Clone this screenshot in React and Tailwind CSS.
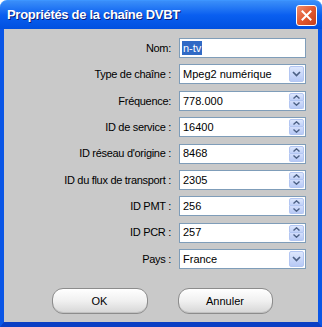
import React from 'react';

const rows = [
  { label: 'Nom:', value: 'n-tv', kind: 'text' },
  { label: 'Type de chaîne :', value: 'Mpeg2 numérique', kind: 'select' },
  { label: 'Fréquence:', value: '778.000', kind: 'spin' },
  { label: 'ID de service :', value: '16400', kind: 'spin' },
  { label: "ID réseau d'origine :", value: '8468', kind: 'spin' },
  { label: 'ID du flux de transport :', value: '2305', kind: 'spin' },
  { label: 'ID PMT :', value: '256', kind: 'spin' },
  { label: 'ID PCR :', value: '257', kind: 'spin' },
  { label: 'Pays :', value: 'France', kind: 'select' },
];

function Chevron() {
  return (
    <svg width="9" height="6" viewBox="0 0 9 6" className="block">
      <path d="M1 1 L4.5 4.5 L8 1" fill="none" stroke="#4d6185" strokeWidth="1.7" />
    </svg>
  );
}

function Field({ row }) {
  return (
    <div className="relative flex h-[20px] w-[127px] items-center border border-[#7f9db9] bg-white">
      {row.kind === 'text' ? (
        <span className="ml-[2px] bg-[#316ac5] px-[1px] leading-[14px] text-white">{row.value}</span>
      ) : (
        <span className="ml-[3px]">{row.value}</span>
      )}
      {row.kind === 'select' && (
        <div className="absolute right-[1px] top-[1px] flex h-[16px] w-[15px] items-center justify-center rounded-[2px] border border-[#b3c6f2] bg-gradient-to-b from-[#dde7fd] to-[#b7c9f5]">
          <Chevron />
        </div>
      )}
      {row.kind === 'spin' && (
        <div className="absolute right-[1px] top-[1px] flex h-[16px] w-[15px] flex-col">
          <div className="flex h-[8px] items-center justify-center rounded-t-[2px] border border-[#b3c6f2] bg-gradient-to-b from-[#dde7fd] to-[#c0d0f7]">
            <svg width="7" height="4" viewBox="0 0 7 4"><path d="M0.5 3.5 L3.5 0.8 L6.5 3.5" fill="none" stroke="#4d6185" strokeWidth="1.4" /></svg>
          </div>
          <div className="flex h-[8px] items-center justify-center rounded-b-[2px] border border-t-0 border-[#b3c6f2] bg-gradient-to-b from-[#d2ddfb] to-[#b7c9f5]">
            <svg width="7" height="4" viewBox="0 0 7 4"><path d="M0.5 0.5 L3.5 3.2 L6.5 0.5" fill="none" stroke="#4d6185" strokeWidth="1.4" /></svg>
          </div>
        </div>
      )}
    </div>
  );
}

function XpButton({ children, w }) {
  return (
    <div className={`flex h-[26px] ${w} items-center justify-center rounded-[11px] border border-[#8c8c8c] bg-gradient-to-b from-[#ffffff] via-[#f0f0f0] to-[#d6d6d6] shadow-[inset_0_-1px_0_#c2c2c2]`}>
      {children}
    </div>
  );
}

export default function App() {
  return (
    <div className="flex h-[327px] w-[322px] flex-col text-[11px] text-black" style={{ fontFamily: '"Liberation Sans", Arial, sans-serif' }}>
      {/* title bar */}
      <div className="relative flex h-[29px] shrink-0 items-center rounded-t-[7px] border-t border-[#3d95ff] bg-gradient-to-b from-[#3a8ef8] via-[#0a5ff0] to-[#0050e0] pl-[7px]">
        <span className="text-[13px] font-bold tracking-[-0.3px] text-white [text-shadow:1px_1px_0_#0a1e78]">
          Propriétés de la chaîne DVBT
        </span>
        <div className="absolute left-[296px] top-[4px] flex h-[21px] w-[21px] items-center justify-center rounded-[3px] border border-white bg-gradient-to-br from-[#f08c6c] via-[#e2582f] to-[#c4401c]">
          <svg width="11" height="11" viewBox="0 0 11 11">
            <path d="M1.5 1.5 L9.5 9.5 M9.5 1.5 L1.5 9.5" stroke="white" strokeWidth="2" strokeLinecap="square" />
          </svg>
        </div>
      </div>

      {/* body */}
      <div className="flex flex-1 flex-col border-x-[4px] border-b-[5px] border-x-[#0a56e6] border-b-[#0a3fc4] bg-[#c9c9c9]">
        <div className="mt-[9px] flex flex-col gap-[6.4px]">
          {rows.map((row) => (
            <div key={row.label} className="flex items-center">
              <div className="w-[167px] text-right tracking-[-0.3px]">{row.label}</div>
              <div className="ml-[8px]">
                <Field row={row} />
              </div>
            </div>
          ))}
        </div>
        <div className="mt-[19px] flex justify-center gap-[30px] pl-[2px]">
          <XpButton w="w-[96px]">OK</XpButton>
          <XpButton w="w-[95px]">Annuler</XpButton>
        </div>
      </div>
    </div>
  );
}
